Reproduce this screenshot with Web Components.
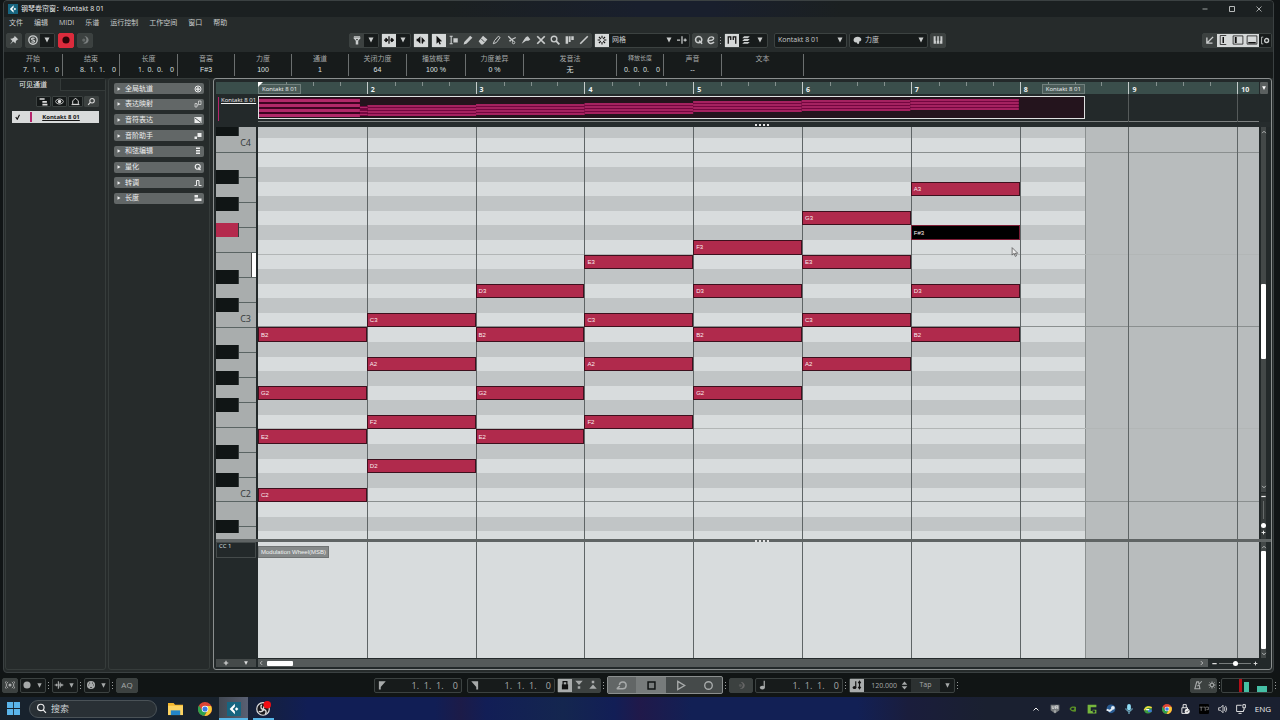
<!DOCTYPE html>
<html lang="zh-CN">
<head>
<meta charset="utf-8">
<title>钢琴卷帘窗：Kontakt 8 01</title>
<style>
html,body{margin:0;height:100%}
body{background:#111516;color:#c9cccc;font:7px/10px "Open Sans","Noto Sans CJK SC",sans-serif;overflow:hidden}
</style>
</head>
<body>
<daw-desktop></daw-desktop>
<script>
const ICONS = {
  down:'<path d="M3 3h10l-5 10z" fill="currentColor"/>',
  right:'<path d="M2 1l12 7-12 7z" fill="currentColor"/>',
  pin:'<path d="M9 1l6 6-2 .5-2 2.500-.5 3.500L7 10.500 1.500 15l4-5.500L2 6l3.500-.5L8.500 3.500z" fill="currentColor"/>',
  solo:'<circle cx="8" cy="8" r="6.700" fill="none" stroke="currentColor" stroke-width="2.200"/><path d="M10.500 5.500c-1-1-5-1-5 1s5 1.500 5 3.300-4 2-5 .7" fill="none" stroke="currentColor" stroke-width="2"/>',
  dot:'<circle cx="8" cy="8" r="5.700" fill="currentColor"/>',
  moon:'<path d="M7 2a6 6 0 1 1-2 11.300A6 6 0 0 0 7 2z" fill="currentColor"/><circle cx="6" cy="8" r="2.600" fill="currentColor" opacity=".6"/>',
  funnel:'<path d="M3 3h10M4 5.500h8L9 9v5H7V9z" fill="none" stroke="currentColor" stroke-width="2"/>',
  link:'<path d="M0 8h6M10 8h6M8 2v12M3 5v6M13 5v6" stroke="currentColor" stroke-width="2" fill="none"/><path d="M3 4l4 4-4 4zM11 4l4 4-4 4z" fill="currentColor"/>',
  audition:'<path d="M1 6h2l4-4v12l-4-4H1zM9 3l6 7-3 .5-1 3.500-2-1z" fill="currentColor"/>',
  arrow:'<path d="M4 1l9 9-4 .3 2 4-2 1-2-4.200L4 14z" fill="currentColor"/>',
  range:'<path d="M1 2h5M3.500 2v12M1 14h5" stroke="currentColor" stroke-width="1.800"/><path d="M7 5h7v7H7z" fill="currentColor"/>',
  pencil:'<path d="M1 15l1-4L11.500 1 15 4.500 5.500 14z" fill="currentColor"/>',
  eraser:'<path d="M8 1l7 6-7 8H5L1 10z" fill="currentColor"/><path d="M5 6l5 5" stroke="#3c4140" stroke-width="1.500"/>',
  brush:'<path d="M2 14l2-5 6-7 3 2-6 8z" fill="none" stroke="currentColor" stroke-width="1.600"/>',
  scissors:'<path d="M2 2l8 8M14 4l-8 4" stroke="currentColor" stroke-width="2"/><circle cx="10.500" cy="12" r="2" fill="none" stroke="currentColor" stroke-width="1.500"/><circle cx="5" cy="9" r="1.500" fill="currentColor"/>',
  glue:'<path d="M1 14l4-7 3-4 3-1 4 5-3 2-4 0z" fill="currentColor"/>',
  cross:'<path d="M2 2l12 12M14 2L2 14" stroke="currentColor" stroke-width="2.800"/>',
  zoom:'<circle cx="6.500" cy="6.500" r="4.500" fill="none" stroke="currentColor" stroke-width="2.200"/><path d="M9.500 9.500L15 15" stroke="currentColor" stroke-width="2.800"/>',
  search:'<circle cx="9" cy="6.500" r="4" fill="none" stroke="currentColor" stroke-width="1.800"/><path d="M6 9.500L2 14" stroke="currentColor" stroke-width="2"/>',
  lens:'<circle cx="7" cy="6.500" r="4.700" fill="none" stroke="currentColor" stroke-width="1.700"/><path d="M10.500 10L14.500 14.500" stroke="currentColor" stroke-width="1.700"/>',
  comp:'<path d="M1 2h4v12H1zM6 2h3v9H6zM10 2h4v6h-4z" fill="currentColor"/>',
  line:'<path d="M2 14L14 2" stroke="currentColor" stroke-width="2.500"/>',
  snap:'<path d="M8 1v4M8 11v4M1 8h4M11 8h4M3 3l3 3M13 3l-3 3M3 13l3-3M13 13l-3-3" stroke="currentColor" stroke-width="1.700"/>',
  nudge:'<path d="M0 8h5M8 2v12M10.500 8h5M13 5.500v5" stroke="currentColor" stroke-width="2"/>',
  q:'<circle cx="7.500" cy="7.500" r="5" fill="none" stroke="currentColor" stroke-width="2.400"/><path d="M8 9l5 5" stroke="currentColor" stroke-width="2.400"/>',
  e:'<path d="M3 8.500C14 10 14 3 9 3S2 8 4 11.500s6 2 9 0" fill="none" stroke="currentColor" stroke-width="2.200"/>',
  bracket:'<path d="M2 14V3h4v5M14 14V3h-4v5" fill="none" stroke="currentColor" stroke-width="2"/>',
  layers:'<path d="M5 2h9l-3 3H2zM5 6.500h9l-3 3H2zM5 11h9l-3 3H2z" fill="currentColor"/>',
  palette:'<path d="M8 1.500c9 0 8 9 3 8v3c-1 3-4 1.500-4-1-5 1-6-3-6-4.500C1 3 5 1.500 8 1.500z" fill="currentColor"/>',
  keys:'<path d="M1 2h14v12H1z" fill="currentColor"/><path d="M5.500 2v12M10.500 2v12" stroke="#3c4140" stroke-width="1.300"/><path d="M4.300 2h2.500v7H4.300zM9.300 2h2.500v7H9.300z" fill="#3c4140"/>',
  corner:'<path d="M13 3L4 12M3 4v9h9" stroke="currentColor" stroke-width="2.200" fill="none"/>',
  pane1:'<path d="M11 2H3v12h8" fill="none" stroke="currentColor"/><path d="M7 4v8" stroke="currentColor" stroke-width="2"/>',
  pane2:'<path d="M1.500 2.500h13v11h-13z" fill="none" stroke="currentColor"/><path d="M5 4v8" stroke="currentColor" stroke-width="2.500"/>',
  pane3:'<path d="M1.500 2.500h13v11h-13z" fill="none" stroke="currentColor"/><path d="M3 10.500h10v2H3z" fill="currentColor"/>',
  gear:'<path d="M8 1v3M8 12v3M1 8h3M12 8h3M3 3l2 2M11 11l2 2M13 3l-2 2M3 13l2-2" stroke="currentColor" stroke-width="2"/><circle cx="8" cy="8" r="3.600" fill="none" stroke="currentColor" stroke-width="2"/>',
  setup:'<path d="M4 2H1v12h3" fill="none" stroke="currentColor" stroke-width="1.500"/><circle cx="10" cy="8" r="3.500" fill="none" stroke="currentColor" stroke-width="2.400"/>',
  tree:'<path d="M1 2h9v3H1zM6 7h8v3H6zM6 12h9v3H6z" fill="currentColor"/>',
  eye:'<path d="M.5 8C4 2 12 2 15.500 8 12 14 4 14 .5 8z" fill="none" stroke="currentColor" stroke-width="1.600"/><circle cx="8" cy="8" r="3.200" fill="currentColor"/>',
  home:'<path d="M3 13V7l5-5 5 5v6zM1 13.500h14" fill="none" stroke="currentColor" stroke-width="1.700"/>',
  globe:'<circle cx="8" cy="8" r="6" fill="none" stroke="currentColor" stroke-width="2"/><path d="M8 4v8M4 8h8" stroke="currentColor" stroke-width="2.500"/>',
  map:'<path d="M2 7h4v7H2zM9 2h5v7H9zM6 10h3" fill="none" stroke="currentColor" stroke-width="1.300"/>',
  expr:'<path d="M1 2h14v12H1z" fill="currentColor"/><path d="M2 4l12 9" stroke="#5a5f5f" stroke-width="2"/>',
  steps:'<path d="M7 2h8v8H7zM1 9h5v5H1z" fill="currentColor"/>',
  stack:'<path d="M4 1h8v3H4zM4 6h8v3H4zM4 11h8v3H4z" fill="currentColor"/>',
  wave:'<path d="M1 13h4V3h5v10h5" fill="none" stroke="currentColor" stroke-width="2"/>',
  len:'<path d="M1 2h7v5H1zM1 9h14v5H1z" fill="currentColor"/>',
  up:'<path d="M3 11l5-5 5 5" fill="none" stroke="currentColor" stroke-width="2"/>',
  dn:'<path d="M3 5l5 5 5-5" fill="none" stroke="currentColor" stroke-width="2"/>',
  lt:'<path d="M11 3L6 8l5 5" fill="none" stroke="currentColor" stroke-width="2"/>',
  gt:'<path d="M5 3l5 5-5 5" fill="none" stroke="currentColor" stroke-width="2"/>',
  plus:'<path d="M8 2v12M2 8h12" stroke="currentColor" stroke-width="3"/>',
  minus:'<path d="M1 8h14" stroke="currentColor" stroke-width="4"/>',
  min:'<path d="M3 8h10" stroke="currentColor" stroke-width="1.500"/>',
  max:'<path d="M3 3h10v10H3z" fill="none" stroke="currentColor" stroke-width="1.800"/>',
  close:'<path d="M3 3l10 10M13 3L3 13" stroke="currentColor" stroke-width="1.600"/>',
  antenna:'<circle cx="8" cy="8" r="2.500" fill="currentColor"/><path d="M5 3a6 6 0 0 0 0 10M11 3a6 6 0 0 1 0 10M2 2a9 9 0 0 0 0 12M14 2a9 9 0 0 1 0 12" stroke="currentColor" stroke-width="1.500" fill="none"/>',
  audio:'<path d="M1 8h14M4 6v4M7 2v12M10 4v8M12.500 6v4" stroke="currentColor" stroke-width="1.800"/>',
  midi:'<circle cx="8" cy="8" r="6.500" fill="currentColor"/><path d="M4 8h1M5.500 5h1M10 5h1M11.500 8h1M7 12h2" stroke="#111" stroke-width="1.800"/>',
  locL:'<path d="M3 2h11L6 11v4H3z" fill="currentColor"/>',
  locR:'<path d="M13 2H2l8 9v4h3z" fill="currentColor"/>',
  lock:'<path d="M3 7h10v8H3z" fill="currentColor"/><path d="M5 8V2.500h6V8" fill="none" stroke="currentColor" stroke-width="2"/>',
  punchIn:'<path d="M2 1h12L8 8zM6 10h4v4H6z" fill="currentColor"/>',
  punchOut:'<path d="M2 14h12L8 7zM6 1h4v4H6z" fill="currentColor"/>',
  cycle:'<path d="M1 13h8a4.500 4.500 0 1 0-4.500-5M1 13l4-3.500" fill="none" stroke="currentColor" stroke-width="2"/>',
  stop:'<path d="M3 3h10v10H3z" fill="none" stroke="currentColor" stroke-width="2.200"/>',
  play:'<path d="M4 2l10 6-10 6z" fill="none" stroke="currentColor" stroke-width="2"/>',
  ring:'<circle cx="8" cy="8" r="5.500" fill="none" stroke="currentColor" stroke-width="2"/>',
  note:'<path d="M10 1v11" stroke="currentColor" stroke-width="2"/><ellipse cx="7" cy="12" rx="4" ry="3" fill="currentColor"/>',
  tempo:'<path d="M6 2v10M12 2v12M10 5l2-3 2 3M10 11l2 3 2-3" stroke="currentColor" stroke-width="1.800" fill="none"/><ellipse cx="4" cy="12" rx="3" ry="2.500" fill="currentColor"/>',
  spin:'<path d="M3 6.500L8 1l5 5.500zM3 9.500L8 15l5-5.500z" fill="currentColor"/>',
  metro:'<path d="M3 14L6 3h3l2 11zM7 10l7-8" fill="none" stroke="currentColor" stroke-width="1.800"/>',
  cubase:'<rect width="16" height="16" fill="#176580"/><path d="M9 2L3 8l6 6V10.500L6.500 8 9 5.500z" fill="#fff"/><path d="M11 6l2 2-2 2-2-2z" fill="#fff"/>',
  win:'<path d="M0 0h7.500v7.500H0zM8.500 0H16v7.500H8.500zM0 8.500h7.500V16H0zM8.500 8.500H16V16H8.500z" fill="#5ab4ea"/>',
  folder:'<path d="M0 2h6l1.500 2H16v11H0z" fill="#f3b62c"/><path d="M0 5h16v10H0z" fill="#fdd462"/><path d="M3 10h10v5H3z" fill="#2385c8"/>',
  chrome:'<circle cx="8" cy="8" r="8" fill="#dd4536"/><path d="M1 4a8 8 0 0 0 6 12l4-6.500L5 10z" fill="#2da14c"/><path d="M15 4.500A8 8 0 0 1 7.500 16l4-7.500L8 4.500z" fill="#f9cb35"/><circle cx="8" cy="8" r="3.700" fill="#fff"/><circle cx="8" cy="8" r="2.900" fill="#3979e8"/>',
  obs:'<circle cx="7.500" cy="8.500" r="6.700" fill="#1a1a1e" stroke="#ddd" stroke-width="1.300"/><path d="M6 4c-2 3 0 5 2 5s4 2 2 5M3 11c2 1 5 0 5-3s3-4 5-2" stroke="#ddd" stroke-width="1.500" fill="none"/><circle cx="12" cy="4" r="4" fill="#f20d14"/>',
  ua:'<path d="M1 1h14v9l-7 5-7-5z" fill="#777b7d"/><path d="M3.500 3v4h3V3M9 8V3h3.500v5M9 6h3M8 10v4" stroke="#fff" fill="none"/>',
  nvidia:'<path d="M1 8c3-6 8-5 13-4v9C8 14 3 12 1 8z" fill="#5a8f27"/><path d="M4 8c2-3 5-3 7-1-2 4-5 4-7 1z" fill="#1b2030"/>',
  green:'<path d="M1 1h14v4h-9v6h3V9h6v6H1z" fill="#76b73c"/><circle cx="11" cy="12" r="2" fill="#1b2030"/>',
  steam:'<path d="M1 8a7 7 0 1 1 4 6z" fill="#2a5c93"/><circle cx="11" cy="6" r="3" fill="#e6eef5"/><path d="M1 9l5 2 4-3" stroke="#e6eef5" stroke-width="3" fill="none"/>',
  mic:'<rect x="5" y="0" width="6" height="10" rx="3" fill="#8fdcf4"/><path d="M3 7c0 6 10 6 10 0M8 12v4" stroke="#8fdcf4" stroke-width="1.500" fill="none"/>',
  idm:'<circle cx="8" cy="9" r="6" fill="#3b9b3f"/><path d="M2 10c3-6 8-6 12-4" stroke="#f4d83b" stroke-width="2.500" fill="none"/><path d="M8 9h6v4H8z" fill="#3c79d0"/><path d="M5 9h5" stroke="#fff" stroke-width="2"/>',
  usb:'<path d="M3 6h9v9H3zM5 6V1h5v5" fill="none" stroke="#eee" stroke-width="1.500"/><circle cx="11.500" cy="11.500" r="4" fill="#eee"/><path d="M9.500 11.500l1.500 1.500 2.500-3" stroke="#333" fill="none"/>',
  rec:'<rect width="16" height="16" rx="2" fill="#000"/><path d="M1 5h5M3.500 5v6M7 5h3v6M11 5h4v4h-3" stroke="#aaa" fill="none"/>',
  vol:'<path d="M1 6h3l4-4v12L4 10H1zM10 5q2 3 0 6M12 3q4 5 0 10" fill="none" stroke="#e8e8e8" stroke-width="1.300"/>',
  net:'<path d="M9 2H1v10h11V9M4 15h5" fill="none" stroke="#e8e8e8" stroke-width="1.500"/><path d="M11 1h4v5h-4zM13 6v4" fill="none" stroke="#e8e8e8" stroke-width="1.500"/>'
};
const ic = (n, s = 10) => `<svg width="${s}" height="${s}" viewBox="0 0 16 16" aria-hidden="true">${ICONS[n]}</svg>`;
const COMMON = `*{box-sizing:border-box}button,select,input{font:inherit;color:inherit;border:0;background:none;padding:0;margin:0;border-radius:0}
svg{display:block;flex:none}button{display:flex;align-items:center;justify-content:center;flex:none}`;

function define(tag, css, html) {
  customElements.define(tag, class extends HTMLElement {
    constructor() {
      super();
      const t = document.createElement('template');
      t.innerHTML = `<style>${COMMON}${css}</style>${html}`;
      this.attachShadow({mode: 'open'}).append(t.content.cloneNode(true));
    }
  });
}

/* Shared pieces of the tool bars */
const BAR = `.g{display:flex;height:15px;border:1px solid #3c4241;border-radius:2px;background:#171b1b;flex:none;align-items:stretch}
.g.f{background:#3c4140}.b{width:14px}.on{background:#d6d9d9;color:#111}
.t{display:flex;flex:none}.dots{width:4px;align-self:center;height:7px;background:repeating-linear-gradient(#9a9d9d 0 1px,transparent 1px 3px) center/1px 100% no-repeat;flex:none}
.sel{display:grid;align-items:center}.sel select,.sel svg{grid-area:1/1}.sel select{appearance:none;padding:0 3px;width:100%;outline:0}.sel svg{justify-self:end;margin-right:2px;pointer-events:none}`;
const btn = (n, label, cls = '', s = 10) => `<button class="b ${cls}" aria-label="${label}">${ic(n, s)}</button>`;

define('title-bar', `:host{display:flex;align-items:center;height:16px;padding:0 10px 0 4px;gap:3px;background:linear-gradient(90deg,#1b2021 35%,#191f2d 50%,#191f2d 56%,#1b2021 66%)}
h1{font:inherit;margin:0;color:#e8eaea;flex:1}nav{display:flex;gap:18px}button{width:9px}`,
`${ic('cubase', 10)}<h1>钢琴卷帘窗：Kontakt 8 01</h1><nav>${['min','max','close'].map(n => `<button aria-label="${n}">${ic(n, 8)}</button>`).join('')}</nav>`);

define('menu-bar', `:host{display:flex;gap:11px;height:11px;padding:0 5px;align-items:center}`,
['文件','编辑','MIDI','乐谱','运行控制','工作空间','窗口','帮助'].map(t => `<button>${t}</button>`).join(''));

const TOOLS = ['range','pencil','eraser','brush','scissors','glue','cross','zoom','comp','line'];
define('tool-bar', `:host{display:flex;height:24px;align-items:center;padding:0 1px 0 2px;gap:2px}${BAR}
.left{display:flex;gap:3px;flex:0 0 341px}.rec{background:#dc2b3c;color:#2a0508;border-color:#dc2b3c}.tools{width:161px;justify-content:space-between}.qe .b{width:12px}
.grid{width:66px}.trk{width:73px;margin-left:4px}.vel{width:79px}.vel>.sel{flex:1}.right{margin-left:auto}.dim{color:#7c8080}.p{align-self:center;margin-left:3px}`,
`<div class="left"><div class="g f">${btn('pin','固定')}</div><div class="g f">${btn('solo','独奏')}<button class="b" style="background:#171b1b" aria-label="独奏选项">${ic('down',8)}</button></div>
<div class="g rec">${btn('dot','录制')}</div><div class="g f dim">${btn('moon','回溯录制')}</div></div>
<div class="g f">${btn('funnel','过滤')}<button class="b" style="background:#171b1b" aria-label="过滤选项">${ic('down',8)}</button></div>
<div class="g">${btn('link','自动滚动','on')}${btn('down','滚动选项','',8)}</div>
<div class="g">${btn('audition','试听','on')}</div>
<div class="g f tools">${btn('arrow','选择','on')}${TOOLS.map(n => btn(n, n)).join('')}</div>
<div class="g">${btn('snap','吸附','on')}<div class="sel grid"><select aria-label="吸附类型"><option>网格</option></select>${ic('down',8)}</div>${btn('nudge','微调')}</div>
<div class="t"><div class="g f qe">${btn('q','量化')}${btn('e','量化面板')}</div><i class="dots"></i></div>
<div class="g">${btn('bracket','声部','on')}${btn('layers','图层')}${btn('down','图层选项','',8)}</div>
<div class="g trk sel"><select aria-label="音轨"><option>Kontakt 8 01</option></select>${ic('down',8)}</div>
<div class="g vel"><span class="p">${ic('palette',9)}</span><div class="sel"><select aria-label="颜色"><option>力度</option></select>${ic('down',8)}</div></div>
<div class="g f">${btn('keys','键盘')}</div>
<div class="g f right">${btn('corner','打开')}${btn('pane1','左区','on',12)}${btn('pane2','检查器','on',12)}${btn('pane3','下区','on',12)}<button class="b" style="background:#171b1b;width:12px" aria-label="设置">${ic('setup',9)}</button></div>`);

const INFO = [['开始','7.  1.  1.    0',59,1],['结束','8.  1.  1.    0',57,1],['长度','1.  0.  0.    0',58,1],['音高','F#3',57],['力度','100',57],['通道','1',57],['关闭力度','64',58],['播放概率','100 %',59],['力度差异','0 %',58],['发音法','无',93],['释放长度','0.  0.  0.    0',47,2],['声音','--',58],['文本','',82]];
define('info-line', `:host{display:flex;height:26px;background:#171b1b;padding:2px 0}
dl{margin:0;height:22px;border-right:1px solid #6b6f6f;flex:none;text-align:center}dt{height:11px;color:#a5a8a8;line-height:9px}dd{margin:0;height:10px;white-space:pre;color:#dfe1e1;line-height:10px;font-family:"Liberation Sans","Noto Sans CJK SC",sans-serif}
.r dd{text-align:right;padding-right:3px;font-family:inherit}.n dt{font-size:6px}`,
INFO.map(([a,b,w,r]) => `<dl style="width:${w}px" class="${r ? 'r' : ''} ${r === 2 ? 'n' : ''}"><dt>${a}</dt><dd>${b}</dd></dl>`).join(''));

define('channel-panel', `:host{display:flex;flex-direction:column;width:101px;border:1px solid #363c3b;border-radius:3px;padding:0 6px}
h2{font:inherit;margin:0 -6px;height:12px;display:flex;color:#eee}h2 b{font-weight:400;width:54px;text-align:center;line-height:12px}h2 i{flex:1;border:1px solid #343a39;border-width:0 0 1px 1px;background:#1f2424}
.t{display:flex;justify-content:flex-end;gap:1px;margin:5px 0 4px;color:#ddd}.t button{width:15px;height:11px;background:#141818;border:1px solid #3c4241;border-radius:1px}.t button:last-child{background:#3c4140}
label{display:flex;height:12px;align-items:center;background:#d9dbdb;color:#161616;position:relative}input{appearance:none;width:18px;height:12px;background:none}label svg{position:absolute;left:3px}
i.c{width:2px;height:10px;background:#b5256c}label span{flex:1;text-align:center;font-weight:700;text-decoration:underline;font-size:6px;margin-right:9px}`,
`<h2><b>可见通道</b><i></i></h2><div class="t">${[['tree','列表'],['eye','可见性'],['home','主页'],['search','搜索']].map(([n,l]) => `<button aria-label="${l}">${ic(n,9)}</button>`).join('')}</div>
<label><input type="checkbox" checked><svg width="6" height="6" viewBox="0 0 8 8"><path d="M1 4l2 3 3-6" fill="none" stroke="#111" stroke-width="1.500"/></svg><i class="c"></i><span>Kontakt 8 01</span></label>`);

define('inspector-panel', `:host{display:block;width:102px;border:1px solid #363c3b;border-radius:3px;padding:4px 5px}
div{display:flex;flex-direction:column;justify-content:space-between;height:121px}button{height:11px;width:100%;background:#626767;border-radius:2px;padding:0 2px 0 3px;gap:4px;color:#eceded}span{flex:1;text-align:left}`,
`<div>${[['全局轨道','globe'],['表达映射','map'],['音符表达','expr'],['音阶助手','steps'],['和弦编辑','stack'],['量化','q'],['转调','wave'],['长度','len']].map(([t,n]) => `<button>${ic('right',4)}<span>${t}</span>${ic(n,8)}</button>`).join('')}</div>`);

/* The time axis shows 9.2 bars: 46 units, five to a bar. The part ends at unit 38. */
const AXIS = 'display:grid;grid-template-columns:repeat(46,minmax(0,1fr))';
const barLines = (from = 1) => Array.from({length: 10 - from}, (_, i) => `<i class="v" style="grid-column:${(i + from) * 5 + 1}"></i>`).join('');

define('time-ruler', `:host{${AXIS};grid-template-rows:12px;background:#3a4e4b;color:#f0f3f3}
.bar{grid-row:1;display:grid;grid-template-columns:repeat(4,1fr);border-left:1px solid #c4cbca;position:relative}.bar i{border-left:1px solid #83908e;height:4px}.bar i:first-child{border:0}
b{position:absolute;left:3px;top:2px;font-size:7px;line-height:11px}.tag{grid-row:1;z-index:1;align-self:end;height:10px;border:1px solid #71807d;background:#4a5b58;font-size:6px;line-height:8px;padding:0 3px;white-space:nowrap}
.tri{grid-area:1/1;z-index:2;width:5px;height:5px;background:#fff;clip-path:polygon(0 0,100% 0,0 100%)}`,
Array.from({length: 10}, (_, i) => `<div class="bar" style="grid-column:${i * 5 + 1}/${i < 9 ? i * 5 + 6 : 47}">${i < 9 ? '<i></i><i></i><i></i><i></i>' : ''}${i ? `<b>${i + 1}</b>` : ''}</div>`).join('') +
`<span class="tag" style="grid-column:1/10;justify-self:start">Kontakt 8 01</span><span class="tag" style="grid-column:10/39;justify-self:end">Kontakt 8 01</span><i class="tri"></i>`);

const CHORD_TOPS = [0, 7, 6, 5, 3, 2, 1];
define('part-overview', `:host{${AXIS};grid-template-rows:28px;border-bottom:1px solid #7e8282}
.box{grid-area:1/1/2/39;border:1px solid #dfe1e1;background:#24141d;margin:2px 0 3px;padding:1px 0}.box svg{width:100%;height:100%}
.v{grid-row:1;border-left:1px solid #555a5a}`,
`${barLines(8)}<div class="box"><svg viewBox="0 0 760 19" preserveAspectRatio="none">${CHORD_TOPS.map((y, i) => {
  const tall = i === 0, w = tall ? 93 : 100, h = tall ? 18 : 11, step = tall ? 5 : 3;
  let s = `<rect x="${i * 100}" y="${y}" width="${w}" height="${h}" fill="${tall ? '#3d0422' : '#73063f'}"/>`;
  for (let k = 0; k < 4; k++) s += `<rect x="${i * 100}" y="${y + k * step + (tall ? 1 : 0)}" width="${w}" height="${tall ? 3 : 2}" fill="#b12969" opacity="${tall ? 1 : .8}"/>`;
  return s;
}).join('')}<rect x="93" y="8" width="7" height="10" fill="#73063f"/><path d="M93 9.500h7M93 13.500h7M93 16.500h7" stroke="#b12969"/></svg></div>`);

/* Piano keyboard: whole octaves between a part of the one above and one below */
const BLACK = [10, 25, 40, 67, 83];
define('piano-keys', `:host{display:grid;grid-template-rows:26fr 175fr 175fr 37fr;background:#a9adad;color:#34393a;overflow:hidden;font-size:9px}
.o{display:grid;grid-template-rows:repeat(7,minmax(0,1fr));position:relative;min-height:0}.w{border-bottom:1px solid #5a6463;display:flex;align-items:center;justify-content:flex-end;padding:8px 5px 0 0;min-height:0}
.k{position:absolute;left:0;width:23px;height:8%;background:#101515;border-right:1px solid #353b3b}.red{background:#b42a4d}.held{position:absolute;right:0;width:5px;top:57%;height:14%;background:#fff;border-left:1px solid #444}
.top{grid-template-rows:1fr}.low{grid-template-rows:25fr 12fr}.low .w:last-child{border:0}`,
`<div class="o top"><span class="w">C4</span><i class="k" style="top:0;height:9px"></i></div>` +
[1, 2].map(n => `<div class="o">${'<span class="w"></span>'.repeat(6)}<span class="w">C${4 - n}</span>${BLACK.map((t, j) => `<i class="k ${n === 1 && j === 2 ? 'red' : ''}" style="top:${t}%"></i>`).join('')}${n === 1 ? '<i class="held"></i>' : ''}</div>`).join('') +
`<div class="o low"><span class="w"></span><i class="k" style="top:18px;height:13px"></i><span class="w"></span></div>`);

const NAMES = ['C','C#','D','D#','E','F','F#','G','G#','A','A#','B'];
const CHORDS = [['C2','E2','G2','B2'],['D2','F2','A2','C3'],['E2','G2','B2','D3'],['F2','A2','C3','E3'],['G2','B2','D3','F3'],['A2','C3','E3','G3'],['B2','D3','F#3','A3']];
const pitch = s => NAMES.indexOf(s.slice(0, -1)) + 12 * +s.slice(-1);
define('note-grid', `:host{${AXIS};grid-template-rows:11px repeat(27,minmax(0,1fr)) 8px;background:#d8dcdd;position:relative;overflow:hidden;min-height:0}
.d{background:#c1c5c6;grid-column:1/-1}.l{grid-column:1/-1;border-bottom:1px solid #8a8f8f;z-index:2}.l.s{border-color:#b2b6b6}
.out{grid-area:1/39/-1/-1;background:#b8bcbd;border-left:1px solid #8a8f8f;z-index:1}.v{grid-row:1/-1;border-left:1px solid #5f6566;z-index:2}
.n{z-index:3;background:#b02a4c;border:1px solid #3d101d;color:#fbeef1;font:6px/12px "Liberation Sans",sans-serif;padding:0 0 0 2px;text-align:left;justify-content:flex-start;min-height:0;overflow:hidden}
.n.x{background:#000;border-color:#7d1c35}.cur{position:absolute;left:75%;top:29%;z-index:4}`,
Array.from({length: 29}, (_, i) => {
  const name = NAMES[(49 - i) % 12];
  return (name.includes('#') ? `<i class="d" style="grid-row:${i + 1}"></i>` : '') + (name === 'C' || name === 'F' ? `<i class="l ${name === 'F' ? 's' : ''}" style="grid-row:${i + 1}"></i>` : '');
}).join('') + '<i class="out"></i>' + barLines() +
CHORDS.map((c, b) => c.map(n => `<button class="n ${n === 'F#3' ? 'x' : ''}" style="grid-area:${2 + 48 - pitch(n)}/${b * 5 + 1}/auto/span 5">${n}</button>`).join('')).join('') +
`<svg class="cur" width="10" height="10" viewBox="0 0 16 16"><path d="M5 1v12l3-3 2 5 2-1-2-4h4z" fill="#eee" stroke="#333"/></svg>`);

define('controller-lane', `:host{${AXIS};grid-template-rows:minmax(0,1fr);background:#d8dcdd}
.out{grid-area:1/39/-1/-1;background:#b8bcbd;border-left:1px solid #8a8f8f}.v{grid-row:1/-1;border-left:1px solid #5f6566}
span{grid-area:1/1/2/10;align-self:start;justify-self:start;margin-top:4px;height:12px;line-height:10px;font-size:6px;font-family:"Liberation Sans",sans-serif;padding:0 2px;background:#858989;color:#f0f1f1;border:1px solid #6f7373;white-space:nowrap}`,
`<i class="out"></i>${barLines()}<span>Modulation Wheel(MSB)</span>`);

define('v-scroll', `:host{display:flex;flex-direction:column;align-items:center;background:#434848;margin:0 5px 0 2px;color:#d5d8d8;min-height:0}
b{width:5px;background:#fff;border-radius:1px;flex:75}.a{flex:147}.z{flex:124}:host([kind=lane]) i{flex:0}
button{height:10px;width:7px}:host([kind=lane]) button{height:9px}`, `<button aria-label="上">${ic('up',6)}</button><i class="a"></i><b></b><i class="z"></i><button aria-label="下">${ic('dn',6)}</button>`);

define('piano-editor', `:host{display:grid;flex:1;min-width:0;border:1px solid #8b8f8f;border-radius:3px;padding:3px 0 1px 2px;
grid-template-columns:40px 2px minmax(0,1fr) 12px;grid-template-rows:12px 28px 5px minmax(0,414fr) 3px minmax(0,116fr) 10px;background:#23292a}
.rh{background:#3a4e4b;grid-column:1/3}time-ruler{grid-area:1/3}.opt{grid-area:1/4;width:8px;background:#5a5f5f;border-radius:1px;margin-left:1px;color:#fff}
.name{grid-area:2/1;margin:3px 0 0 2px;border-left:1px solid #b5256c;height:24px;font-size:6px;line-height:7px;color:#f2f2f2;white-space:nowrap;padding-left:2px;text-decoration:underline}
part-overview{grid-area:2/3}.h{grid-column:1/5;background:#5f6464;display:flex;justify-content:center;align-items:center}.h1{grid-row:3;background:#262c2d;grid-column:3/5;padding-right:6px}.h2{grid-row:5;padding-left:36px}
.h::after{content:"";width:14px;height:2px;background:repeating-linear-gradient(90deg,#e5e5e5 0 2px,transparent 2px 4px)}
piano-keys{grid-area:4/1}note-grid{grid-area:4/3}.vs{grid-area:4/4;display:flex;flex-direction:column;min-height:0}.vs v-scroll{flex:1}
.z{margin:1px 5px 0 2px;height:46px;background:#353a3a;display:flex;flex-direction:column;align-items:center;color:#eee}.z i{width:1px;height:18px;background:#666b6b;margin-top:1px}.z b{width:5px;height:5px;border-radius:3px;background:#fff;margin:4px 0 1px}.z button{width:7px;height:7px}
.cc{grid-area:6/1;border:1px solid #454b4b;height:16px;font-size:6px;line-height:7px;padding-left:2px;color:#dfe1e1}controller-lane{grid-area:6/3}.ls{grid-area:6/4}
.add{grid-area:7/1;display:flex;justify-content:space-around;background:#454a4a;margin:1px 0 1px;color:#ddd}.hs{grid-area:7/3/8/5;display:flex;align-items:center;margin-right:13px;color:#ddd}.tr{flex:1;height:8px;background:#555a5a;display:flex;align-items:center}.tr b{width:26px;height:5px;background:#fff;border-radius:1px;margin-left:3px}.tr button:last-child{margin:0 3px 0 auto}
.hz{display:flex;align-items:center;gap:2px;width:50px;padding-left:4px}.hz i{flex:1;height:1px;background:#777c7c;display:flex;justify-content:center;align-items:center}.hz i::after{content:"";width:5px;height:5px;border-radius:3px;background:#fff}`,
`<div class="rh"></div><time-ruler></time-ruler><button class="opt" aria-label="标尺选项">${ic('down',6)}</button>
<div class="name">Kontakt 8 01</div><part-overview></part-overview><div class="h h1"></div>
<piano-keys></piano-keys><note-grid></note-grid><div class="vs"><v-scroll kind="notes"></v-scroll><div class="z"><button aria-label="缩小">${ic('minus',5)}</button><i></i><b></b><button aria-label="放大">${ic('plus',5)}</button></div></div>
<div class="h h2"></div><div class="cc">CC 1</div><controller-lane></controller-lane><v-scroll class="ls" kind="lane"></v-scroll>
<div class="add"><button aria-label="添加">${ic('plus',6)}</button><button aria-label="预设">${ic('down',6)}</button></div>
<div class="hs"><div class="tr"><button aria-label="左">${ic('lt',6)}</button><b></b><button aria-label="右">${ic('gt',6)}</button></div><div class="hz"><button aria-label="缩小">${ic('minus',5)}</button><i></i><button aria-label="放大">${ic('plus',5)}</button></div></div>`);

define('transport-bar', `:host{display:flex;align-items:center;height:24px;padding:0 0 0 2px;background:#111515;color:#a7aaaa;gap:2px}${BAR}
.left{display:flex;gap:2px;flex:0 0 370px}.w2{width:26px;justify-content:space-evenly}.w2 .b{width:12px}.time{width:72px;white-space:pre;text-align:right;line-height:13px;font-size:9px;padding-right:3px}
.on{background:#a9acac}.main{display:flex;height:18px;border:1px solid #8b8f8f;border-radius:2px;background:#454a4a;flex:none}.main button{width:28px}.main .s{background:#777b7b;color:#101414;width:30px}.main button:first-child{background:#626666}
.tempo{width:47px;line-height:13px;display:flex;align-items:center;justify-content:flex-end;gap:3px;padding-right:2px}.tap{width:29px;background:#2c3131}.right{display:flex;margin-left:auto}.meter{width:52px;background:#111515;align-items:flex-end;padding:0 5px 0 17px}.meter i{margin-left:2px;background:#45bfa5;width:5px}.meter i.r{background:#b20e18;width:3px;margin:0}`,
`<div class="left"><div class="g f">${btn('antenna','音频引擎')}</div>
<div class="t"><div class="g w2">${btn('dot','录制模式')}${btn('down','录制模式选项','',7)}</div><i class="dots"></i></div>
<div class="t"><div class="g w2">${btn('audio','音频录制模式')}${btn('down','音频选项','',7)}</div><i class="dots"></i></div>
<div class="t"><div class="g w2">${btn('midi','MIDI 录制模式')}${btn('down','MIDI 选项','',7)}</div><i class="dots"></i></div>
<div class="g f"><button style="width:20px;font-size:8px">AQ</button></div></div>
<div class="g">${btn('locL','左定位')}<span class="time">1.  1.  1.    0</span></div><div class="g" style="margin-left:3px">${btn('locR','右定位')}<span class="time">1.  1.  1.    0</span></div>
<div class="t"><div class="g f">${btn('lock','锁定','on')}${btn('punchIn','插入')}${btn('punchOut','插出')}</div><i class="dots"></i></div>
<div class="t"><div class="main"><button aria-label="循环">${ic('cycle',12)}</button><button class="s" aria-label="停止">${ic('stop',11)}</button><button aria-label="播放">${ic('play',11)}</button><button aria-label="录音">${ic('ring',11)}</button></div><i class="dots"></i></div>
<div class="g f"><button style="width:22px;color:#666" aria-label="回溯">${ic('moon',9)}</button></div>
<div class="t"><div class="g">${btn('note','主时间格式')}<span class="time">1.  1.  1.    0</span></div><i class="dots"></i></div>
<div class="t"><div class="g">${btn('tempo','速度轨道','on')}<span class="tempo">120.000${ic('spin',9)}</span><button class="tap">Tap</button>${btn('down','速度选项','',7)}</div><i class="dots"></i></div>
<div class="right"><div class="g f" style="width:27px">${btn('metro','节拍器')}${btn('gear','节拍器设置','',8)}</div><i class="dots"></i><div class="g meter"><i class="r" style="height:13px"></i><i style="height:10px"></i><i style="height:6px;margin-left:8px"></i><i style="height:6px;margin:0"></i></div><i class="dots" style="margin-right:3px"></i></div>`);

define('task-bar', `:host{display:flex;align-items:center;height:23px;padding:0 9px 0 7px;background:linear-gradient(90deg,#18222d 18%,#111e55 24%,#111e55 34%,#1c1b48 36%,#121e56 38%,#14264f 44%,#121e56 48%,#20194a 50%,#122055 54%,#122055 67%,#1a1d3c 71%,#1a2030 77%);color:#eee}
label{display:flex;align-items:center;width:128px;height:18px;margin:0 4px 0 9px;border:1px solid #4a5257;border-radius:9px;background:#293035;padding:0 6px;gap:4px}input{width:80px;outline:0;font-size:9px}input::placeholder{color:#ccd0d2;opacity:1}
.a{width:29px;height:23px;border-radius:2px 2px 0 0}.act{background:linear-gradient(90deg,#414852,#596073)}.u{border-bottom:2px solid #58b7e8;border-radius:0;padding-top:2px}
.tray{margin-left:auto;display:flex;align-items:center;width:224px}.tray button{flex:1}.eng{font-size:8px;padding-left:4px}`,
`<button aria-label="开始">${ic('win',13)}</button><label>${ic('lens',11)}<input placeholder="搜索" aria-label="搜索"></label>
<button class="a" aria-label="文件资源管理器">${ic('folder',15)}</button><button class="a" aria-label="Chrome">${ic('chrome',14)}</button><button class="a act u" aria-label="Cubase">${ic('cubase',14)}</button><button class="a u" style="width:21px;margin-left:5px" aria-label="OBS">${ic('obs',15)}</button>
<div class="tray">${['up','ua','nvidia','green','steam','mic','idm','chrome','usb','rec','vol','net'].map(n => `<button aria-label="${n}">${ic(n, n === 'up' || n === 'nvidia' ? 8 : 10)}</button>`).join('')}</div><span class="eng">ENG</span>`);

define('daw-desktop', `:host{display:flex;flex-direction:column;height:100vh;background:#111516}
.win{flex:1;min-height:0;margin:0 6px 0 3px;border:1px solid #3b4142;border-radius:4px;background:#262b2b;display:flex;flex-direction:column;padding-bottom:2px;overflow:hidden}
main{flex:1;min-height:0;display:flex;padding:0 1px 0 1px}inspector-panel{margin:0 3px 0 2px}`,
`<section class="win"><title-bar></title-bar><menu-bar></menu-bar><tool-bar></tool-bar><info-line></info-line><main><channel-panel></channel-panel><inspector-panel></inspector-panel><piano-editor></piano-editor></main></section><transport-bar></transport-bar><task-bar></task-bar>`);
</script>
</body>
</html>
